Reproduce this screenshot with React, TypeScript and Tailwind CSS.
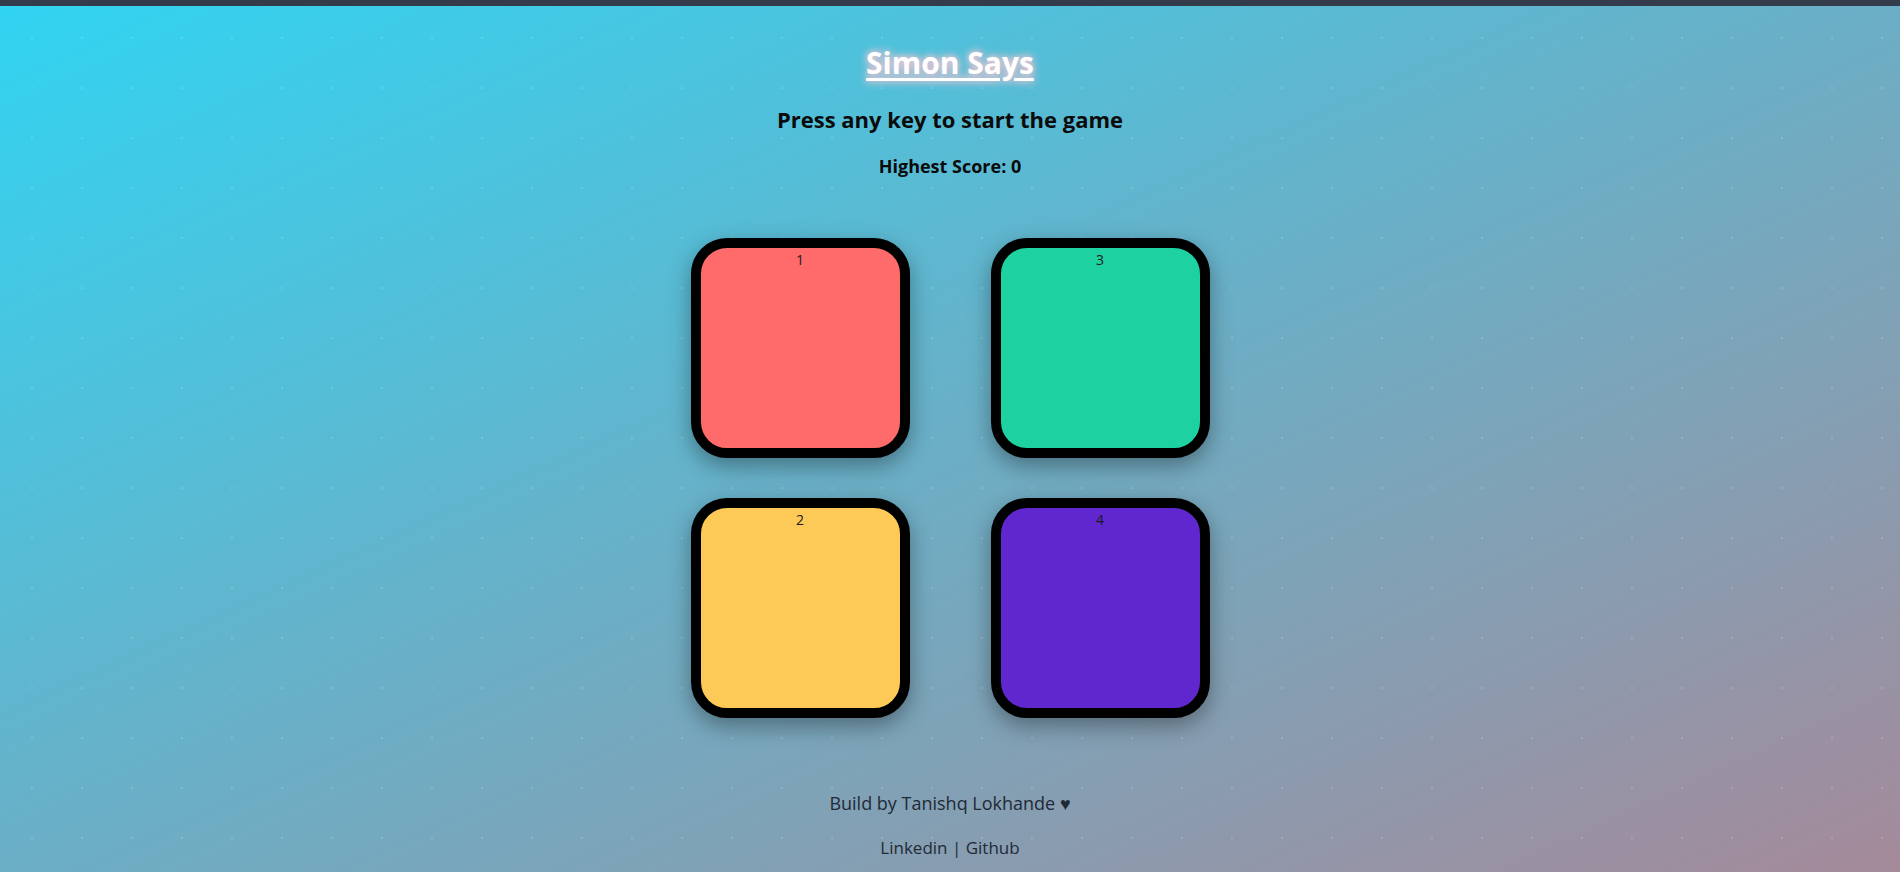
import React from "react";

const boxes = [
  { n: 1, color: "bg-[#ff6b6b]" },
  { n: 3, color: "bg-[#1dd1a1]" },
  { n: 2, color: "bg-[#feca57]" },
  { n: 4, color: "bg-[#5f27cd]" },
];

const App = () => {
  return (
    <div className="w-full min-h-screen flex flex-col font-['Open_Sans',sans-serif]">
      <div className="h-[6px] bg-[#343c4c]"></div>
      <div className="flex-1 bg-[linear-gradient(to_bottom_right,#31d4f2,#a58a9a)]">
        <div className="h-[866px] flex flex-col items-center bg-[radial-gradient(circle,rgba(255,255,255,0.14)_1.2px,transparent_1.6px)] bg-size-[50px_50px] bg-position-[7px_7px]">
          <h1 className="mt-[38px] text-[30px] leading-[38px] font-bold text-white underline decoration-[3px] underline-offset-[4px] [text-shadow:0_0_6px_#f3c6d3,0_0_10px_#f3c6d3]">
            Simon Says
          </h1>
          <h2 className="mt-[22px] text-[22px] leading-[30px] font-bold text-[#0b0b0b]">
            Press any key to start the game
          </h2>
          <h3 className="mt-[20px] text-[18px] leading-[24px] font-bold text-[#0b0b0b]">
            Highest Score: 0
          </h3>

          <div className="mt-[60px] grid grid-cols-[219px_219px] gap-x-[81px] gap-y-[40px]">
            {boxes.map((b) => (
              <div
                key={b.n}
                className={`h-[220px] border-[10px] border-black rounded-[36px] shadow-[0_8px_22px_rgba(0,0,0,0.35)] flex justify-center ${b.color}`}>
                <span className="pt-[2px] text-[14px] leading-[20px] text-[#1a1a1a]">{b.n}</span>
              </div>
            ))}
          </div>

          <p className="mt-[73px] text-[18px] leading-[24px] text-[#1f2a36]">
            Build by Tanishq Lokhande ♥
          </p>
          <p className="mt-[21px] text-[17px] leading-[24px] text-[#1f2a36]">
            Linkedin | Github
          </p>
        </div>
      </div>
    </div>
  );
};

export default App;
